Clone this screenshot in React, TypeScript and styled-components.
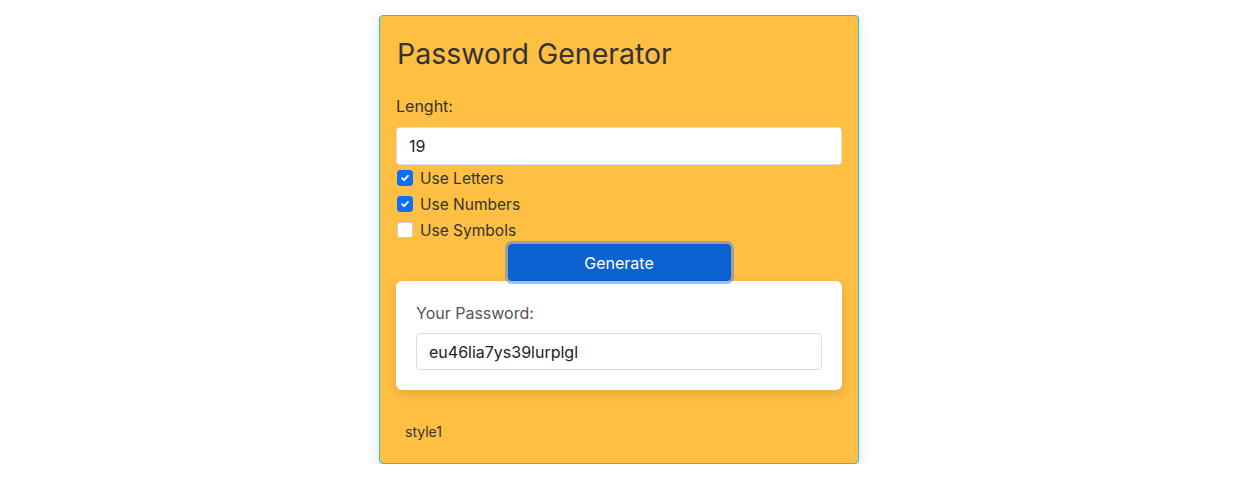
import React from "react";
import styled, { createGlobalStyle } from "styled-components";

const Global = createGlobalStyle`
  html, body { margin: 0; padding: 0; background: #fff; }
  body { font-family: Inter, "Noto Sans", sans-serif; color: #333; }
  * { box-sizing: border-box; }
`;

const Page = styled.div`
  padding: 15px 20px 0 0;
`;

const Card = styled.div`
  width: 480px;
  margin: 0 auto;
  background: #ffbf43;
  border: 1px solid #16c9ee;
  border-radius: 4px;
  box-shadow: 0 4px 14px rgba(0, 0, 0, 0.12);
  padding: 16px 16px 21px 16px;
`;

const Title = styled.h1`
  margin: 0 0 0 1px;
  font-size: 28.5px;
  font-weight: 400;
  line-height: 43px;
  color: #333;
`;

const FieldLabel = styled.label`
  display: block;
  margin-top: 19px;
  font-size: 16px;
  line-height: 24px;
  color: #333;
`;

const TextInput = styled.input`
  display: block;
  width: 100%;
  height: 38px;
  margin-top: 9px;
  padding: 0 12px;
  font-family: inherit;
  font-size: 16px;
  color: #222;
  background: #fff;
  border: 1px solid #dcdce6;
  border-radius: 4px;
  outline: none;
`;

const Checks = styled.div`
  display: flex;
  flex-direction: column;
  margin-top: 0;
`;

const CheckRow = styled.label`
  display: flex;
  align-items: center;
  height: 26px;
  font-size: 15.5px;
  color: #333;
`;

const Box = styled.span<{ $on: boolean }>`
  width: 16px;
  height: 16px;
  margin: 0 7px 0 1px;
  border-radius: 3px;
  display: flex;
  align-items: center;
  justify-content: center;
  background: ${(p) => (p.$on ? "#0d6efd" : "#fff")};
  border: 1px solid ${(p) => (p.$on ? "#0d6efd" : "#c8ccd4")};
`;

const ButtonRow = styled.div`
  text-align: center;
  margin-top: 1px;
  line-height: 0;
`;

const GenerateButton = styled.button`
  display: inline-block;
  width: 223px;
  height: 37px;
  font-family: inherit;
  font-size: 16px;
  line-height: 24px;
  color: #fff;
  background: #0d62d1;
  border: 1px solid #0a58ca;
  border-radius: 4px;
  box-shadow: 0 0 0 3px rgba(49, 132, 253, 0.5);
  cursor: pointer;
`;

const ResultCard = styled.div`
  background: #fff;
  border-radius: 6px;
  box-shadow: 0 4px 12px rgba(0, 0, 0, 0.12);
  padding: 20px;
`;

const ResultLabel = styled.div`
  font-size: 16px;
  line-height: 24px;
  color: #555;
`;

const ResultInput = styled(TextInput)`
  margin-top: 8px;
  height: 37px;
  color: #222;
`;

const Footer = styled.div`
  margin: 32px 0 0 9px;
  font-size: 14px;
  line-height: 20px;
  color: #333;
`;

const Check = () => (
  <svg width="10" height="10" viewBox="0 0 10 10">
    <path d="M2 5.2 L4.1 7.2 L8 2.8" fill="none" stroke="#fff" strokeWidth="1.8" strokeLinecap="round" strokeLinejoin="round" />
  </svg>
);

const options = [
  { label: "Use Letters", on: true },
  { label: "Use Numbers", on: true },
  { label: "Use Symbols", on: false },
];

export default function App() {
  return (
    <>
      <Global />
      <Page>
        <Card>
          <Title>Password Generator</Title>
          <FieldLabel>Lenght:</FieldLabel>
          <TextInput defaultValue="19" />
          <Checks>
            {options.map((o) => (
              <CheckRow key={o.label}>
                <Box $on={o.on}>{o.on && <Check />}</Box>
                {o.label}
              </CheckRow>
            ))}
          </Checks>
          <ButtonRow>
            <GenerateButton>Generate</GenerateButton>
          </ButtonRow>
          <ResultCard>
            <ResultLabel>Your Password:</ResultLabel>
            <ResultInput defaultValue="eu46lia7ys39lurplgl" />
          </ResultCard>
          <Footer>style1</Footer>
        </Card>
      </Page>
    </>
  );
}
